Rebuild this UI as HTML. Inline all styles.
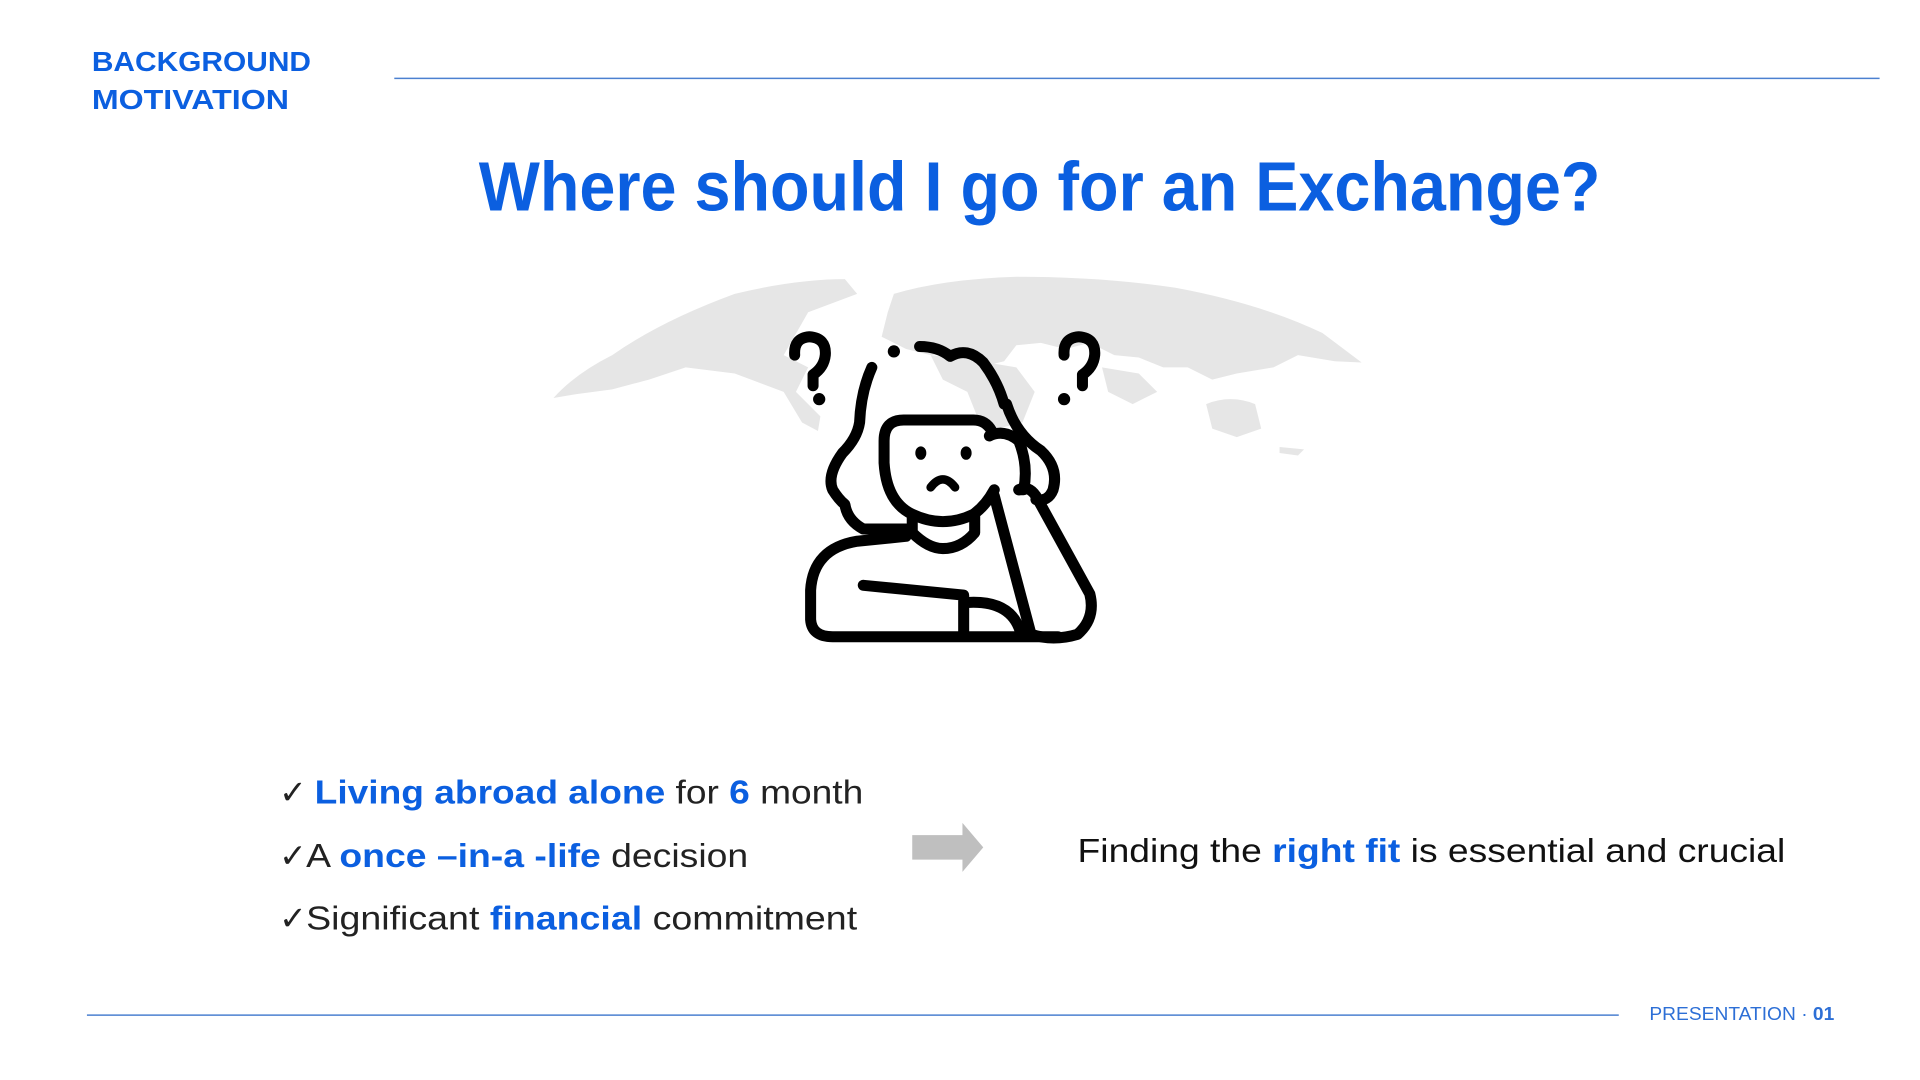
<!DOCTYPE html>
<html><head><meta charset="utf-8"><style>
html,body{margin:0;padding:0;background:#fff;width:1920px;height:1080px;overflow:hidden}
svg{display:block}
text{font-family:"Liberation Sans",sans-serif}
</style></head><body>
<svg width="1920" height="1080" viewBox="0 0 1568 882" xmlns="http://www.w3.org/2000/svg">
<rect width="1568" height="882" fill="#fff"/>
<!-- header -->
<text x="75" y="58" font-size="23" font-weight="bold" fill="#0b5fe0" textLength="179" lengthAdjust="spacingAndGlyphs">BACKGROUND</text>
<text x="75" y="89" font-size="23" font-weight="bold" fill="#0b5fe0" textLength="161" lengthAdjust="spacingAndGlyphs">MOTIVATION</text>
<line x1="322" y1="64" x2="1535" y2="64" stroke="#4b80d0" stroke-width="1.2"/>
<text x="391" y="172" font-size="57" font-weight="bold" fill="#0b5fe0" textLength="916" lengthAdjust="spacingAndGlyphs">Where should I go for an Exchange?</text>
<!-- world map -->
<g fill="#e6e6e6">
<path d="M452,325 Q470,305 500,290 Q540,262 600,240 Q650,228 690,228 L700,240 L660,255 L640,290 L660,300 L650,320 L670,340 L668,352 L655,345 L640,320 L600,305 L560,300 L530,310 L500,318 L470,322 Z"/>
<path d="M730,240 Q770,228 830,226 Q900,226 960,235 Q1030,248 1080,272 L1112,296 L1090,295 L1060,290 L1040,300 L1010,305 L990,310 L970,300 L950,300 L930,292 L910,290 L890,280 L870,285 L850,280 L830,282 L820,295 L800,300 L780,290 L760,290 L740,285 L720,275 L725,255 Z"/>
<path d="M760,290 L800,295 L830,300 L845,320 L835,345 L815,350 L800,345 L790,320 L770,310 Z"/>
<path d="M985,330 Q1005,322 1025,330 L1030,350 L1010,357 L990,350 Z"/>
<path d="M900,300 L930,305 L945,320 L925,330 L905,320 Z"/>
<path d="M1045,365 L1065,367 L1060,372 L1045,370 Z"/>
</g>
<!-- figure -->
<g fill="none" stroke="#000" stroke-width="9" stroke-linecap="round" stroke-linejoin="round">
<path d="M649,290 Q648,276 661,275 Q675,276 674,290 Q673,300 664,306 L664,315"/>
<path d="M869,290 Q868,276 881,275 Q895,276 894,290 Q893,300 884,306 L884,315"/>
<path d="M751,283 Q766,283 776,291 Q790,283 803,296 Q815,312 820,330"/>
<path d="M712,300 Q703,320 702,345 Q700,358 688,370 Q675,388 680,400 Q685,408 690,412 Q692,425 705,432 L740,432"/>
<path d="M822,330 Q830,355 850,368 Q865,382 860,400 Q856,410 846,408"/>
<path d="M810,352 Q805,343 795,343 L738,343 Q722,343 722,360 L722,378 Q724,410 745,420 Q770,432 795,420 Q805,413 812,400"/>
<path d="M808,356 Q820,350 832,360 Q840,380 836,400 L832,400"/>
<path d="M745,422 L745,435 Q758,448 770,448 Q785,448 796,435 L796,422"/>
<path d="M740,438 L700,442 Q664,448 662,482 L662,506 Q663,520 680,520 L864,520"/>
<path d="M705,478 L787,486 L787,518"/>
<path d="M790,492 Q825,490 833,515"/>
<path d="M812,405 L842,518 Q860,524 880,518 Q895,505 890,485 L846,405 Q840,396 832,400"/>
</g>
<g fill="#000">
<circle cx="669" cy="326" r="5"/><circle cx="869" cy="326" r="5"/>
<circle cx="730" cy="287" r="5"/>
<ellipse cx="752" cy="370" rx="4.5" ry="5.5"/><ellipse cx="789" cy="370" rx="4.5" ry="5.5"/>
</g>
<path d="M760,398 Q770,385 780,398" fill="none" stroke="#000" stroke-width="7" stroke-linecap="round"/>
<!-- bullets -->
<g font-size="27" fill="#222">
<text x="228" y="656">✓</text>
<text x="257" y="656" textLength="448" lengthAdjust="spacingAndGlyphs"><tspan fill="#0b5fe0" font-weight="bold">Living abroad alone</tspan> for <tspan fill="#0b5fe0" font-weight="bold">6</tspan> month</text>
<text x="228" y="708">✓</text>
<text x="250" y="708" textLength="361" lengthAdjust="spacingAndGlyphs">A <tspan fill="#0b5fe0" font-weight="bold">once –in-a -life</tspan> decision</text>
<text x="228" y="759">✓</text>
<text x="250" y="759" textLength="450" lengthAdjust="spacingAndGlyphs">Significant <tspan fill="#0b5fe0" font-weight="bold">financial</tspan> commitment</text>
<text x="880" y="704" fill="#111" textLength="578" lengthAdjust="spacingAndGlyphs">Finding the <tspan fill="#0b5fe0" font-weight="bold">right fit</tspan> is essential and crucial</text>
</g>
<path d="M745,682 L786,682 L786,672 L803,692 L786,712 L786,702 L745,702 Z" fill="#bfbfbf"/>
<!-- footer -->
<line x1="71" y1="829" x2="1322" y2="829" stroke="#4b80d0" stroke-width="1.2"/>
<text x="1347" y="833" font-size="15" fill="#2d6fd6" textLength="151" lengthAdjust="spacingAndGlyphs">PRESENTATION · <tspan font-weight="bold">01</tspan></text>
</svg>
</body></html>
